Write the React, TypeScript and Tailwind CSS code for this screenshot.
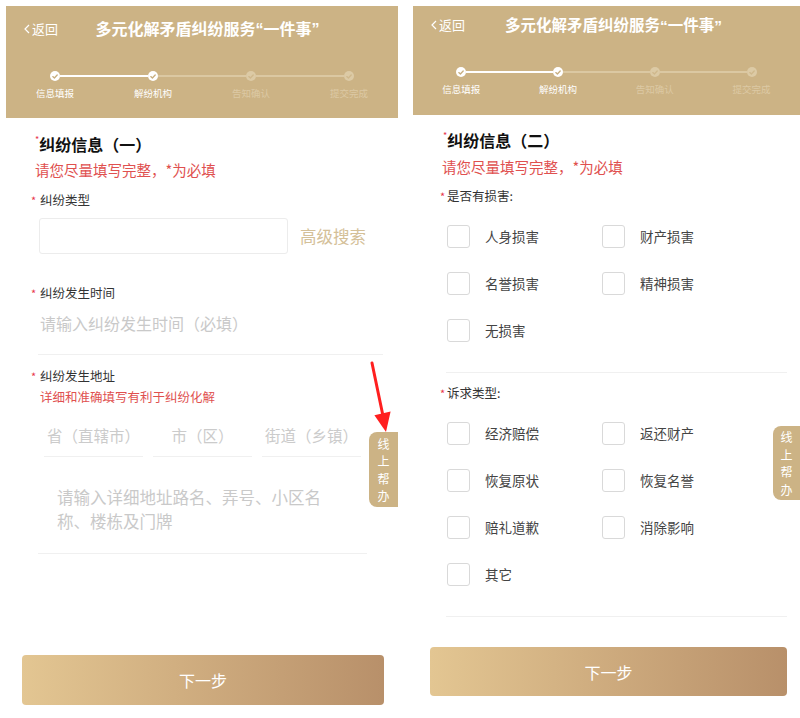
import React from "react";

const GOLD = "bg-[#ccb385]";

const Check = ({ color }: { color: string }) => (
  <svg width="6" height="5" viewBox="0 0 6 5">
    <polyline points="0.8,2.6 2.4,4 5.2,1" fill="none" stroke={color} strokeWidth="1.3" strokeLinecap="round" strokeLinejoin="round" />
  </svg>
);

const Stepper = () => {
  const steps = ["信息填报", "解纷机构", "告知确认", "提交完成"];
  const left = ["bg-transparent", "bg-white", "bg-[#dbc8a2]", "bg-[#dbc8a2]"];
  const right = ["bg-white", "bg-[#dbc8a2]", "bg-[#dbc8a2]", "bg-transparent"];
  return (
    <div className="grid grid-cols-4">
      {steps.map((s, i) => (
        <div key={s} className="flex flex-col items-center">
          <div className="flex items-center w-full h-[10px]">
            <div className={`flex-1 h-[2px] ${left[i]}`} />
            <div
              className={`w-[10px] h-[10px] rounded-full flex items-center justify-center ${
                i < 2 ? "bg-white" : "bg-[#dccaa5]"
              }`}
            >
              <Check color={i < 2 ? "#c8ae7e" : "#cfb88c"} />
            </div>
            <div className={`flex-1 h-[2px] ${right[i]}`} />
          </div>
          <div className={`mt-[5px] text-[9.5px] leading-[14px] ${i < 2 ? "text-white" : "text-[#dcc9a4]"}`}>{s}</div>
        </div>
      ))}
    </div>
  );
};

const Header = ({ h, pr, titleSize, top }: { h: string; pr: string; titleSize: string; top: string }) => (
  <div className={`${GOLD} ${h} flex flex-col`}>
    <div className={`flex items-center ${top}`}>
      <div className="w-[52px] shrink-0 pl-[18px] flex items-center gap-[2px] whitespace-nowrap text-white text-[13px]">
        <svg width="6" height="10" viewBox="0 0 6 10" className="shrink-0">
          <polyline points="5,1 1,5 5,9" fill="none" stroke="white" strokeWidth="1.2" />
        </svg>
        <span>返回</span>
      </div>
      <div className={`flex-1 text-center whitespace-nowrap text-white font-bold ${titleSize}`}>
        多元化解矛盾纠纷服务<span className="font-['Liberation_Sans',sans-serif]">“</span>一件事<span className="font-['Liberation_Sans',sans-serif]">”</span>
      </div>
      <div className={`shrink-0 ${pr}`} />
    </div>
    <Stepper />
  </div>
);

const Star = () => <span className="text-[#e8364c] text-[11px] w-[9px] inline-block">*</span>;

const SideTab = ({ cls }: { cls: string }) => (
  <div className={`absolute right-0 ${cls} ${GOLD} rounded-l-[8px] flex flex-col items-center justify-center text-white text-[12px] leading-[17.5px]`}>
    {"线上帮办".split("").map((c) => (
      <span key={c}>{c}</span>
    ))}
  </div>
);

const Box = ({ label }: { label: string }) => (
  <div className="flex items-center h-[47px]">
    <div className="w-[23px] h-[23px] border border-[#d9d9d9] rounded-[3px] bg-white" />
    <span className="ml-[15px] text-[13.5px] text-[#444]">{label}</span>
  </div>
);

const LeftPanel = () => (
  <div className="relative w-[392px] h-[712px] mt-[6px] ml-[6px] bg-white">
    <Header h="h-[112px]" pr="w-[41px]" titleSize="text-[16px]" top="h-[46px] mb-[19px]" />
    <div className="flex flex-col">
      <div className="ml-[29px] mt-[15px] flex items-start leading-[22px]">
        <span className="text-[#e8364c] text-[9px] leading-[14px]">*</span>
        <span className="text-[16px] font-bold text-[#111]">纠纷信息（一）</span>
      </div>
      <div className="ml-[29px] mt-[5px] text-[14.5px] leading-[20px] text-[#e0504f]">请您尽量填写完整，*为必填</div>
      <div className="ml-[25px] mt-[11px] flex items-center leading-[18px] text-[12.5px] text-[#333]">
        <Star />
        <span>纠纷类型</span>
      </div>
      <div className="ml-[33px] mt-[9px] flex items-center">
        <div className="w-[249px] h-[36px] border border-[#ececec] rounded-[3px]" />
        <span className="ml-[12px] text-[16.5px] text-[#d4c098]">高级搜索</span>
      </div>
      <div className="ml-[25px] mt-[30px] flex items-center leading-[18px] text-[12.5px] text-[#333]">
        <Star />
        <span>纠纷发生时间</span>
      </div>
      <div className="ml-[34px] mt-[10px] text-[16px] leading-[22px] text-[#c9c9c9]">请输入纠纷发生时间（必填）</div>
      <div className="ml-[32px] mt-[20px] w-[345px] h-px bg-[#f0f0f0]" />
      <div className="ml-[25px] mt-[12px] flex items-center leading-[18px] text-[12.5px] text-[#333]">
        <Star />
        <span>纠纷发生地址</span>
      </div>
      <div className="ml-[34px] mt-[3px] text-[12.5px] leading-[18px] text-[#e0504f]">详细和准确填写有利于纠纷化解</div>
      <div className="ml-[38px] mt-[18px] flex gap-[10px]">
        {["省（直辖市）", "市（区）", "街道（乡镇）"].map((t) => (
          <div key={t} className="w-[99px] pb-[10px] border-b border-[#f0f0f0] text-center text-[15.5px] leading-[22px] text-[#cbcbcb]">
            {t}
          </div>
        ))}
      </div>
      <div className="ml-[51px] mt-[28px] text-[16.5px] leading-[24px] text-[#c9c9c9]">
        请输入详细地址路名、弄号、小区名
        <br />
        称、楼栋及门牌
      </div>
      <div className="ml-[32px] mt-[20px] w-[329px] h-px bg-[#f0f0f0]" />
      <button className="ml-[16px] mt-[101px] w-[362px] h-[50px] rounded-[4px] bg-gradient-to-r from-[#e3c692] to-[#b8906a] text-white text-[16px]">
        下一步
      </button>
    </div>
    <SideTab cls="top-[426px] w-[29px] h-[75px]" />
    <svg className="absolute left-[355px] top-[350px]" width="37" height="85" viewBox="0 0 37 85">
      <line x1="11" y1="7" x2="21.6" y2="58" stroke="#ff1f1f" strokeWidth="3" strokeLinecap="round" />
      <polygon points="25,76 29.6,55.6 13.4,59.2" fill="#ff1f1f" />
    </svg>
  </div>
);

const RightPanel = () => (
  <div className="relative w-[387px] h-[712px] mt-[6px] ml-[15px] bg-white">
    <Header h="h-[109px]" pr="w-[38px]" titleSize="text-[15.5px]" top="h-[38px] mb-[23px]" />
    <div className="flex flex-col">
      <div className="ml-[30px] mt-[14px] flex items-start leading-[22px]">
        <span className="text-[#e8364c] text-[9px] leading-[14px]">*</span>
        <span className="text-[16px] font-bold text-[#111]">纠纷信息（二）</span>
      </div>
      <div className="ml-[29px] mt-[6px] text-[14.5px] leading-[20px] text-[#e0504f]">请您尽量填写完整，*为必填</div>
      <div className="ml-[27px] mt-[10px] flex items-center leading-[18px] text-[12.5px] text-[#333]">
        <span className="text-[#e8364c] text-[11px] w-[7px] inline-block">*</span>
        <span>是否有损害:</span>
      </div>
      <div className="ml-[34px] mt-[8px] grid grid-cols-[155px_155px]">
        {["人身损害", "财产损害", "名誉损害", "精神损害", "无损害"].map((t) => (
          <Box key={t} label={t} />
        ))}
      </div>
      <div className="ml-[33px] mt-[18px] w-[341px] h-px bg-[#f0f0f0]" />
      <div className="ml-[27px] mt-[11px] flex items-center leading-[18px] text-[12.5px] text-[#333]">
        <span className="text-[#e8364c] text-[11px] w-[7px] inline-block">*</span>
        <span>诉求类型:</span>
      </div>
      <div className="ml-[34px] mt-[8px] grid grid-cols-[155px_155px]">
        {["经济赔偿", "返还财产", "恢复原状", "恢复名誉", "赔礼道歉", "消除影响", "其它"].map((t) => (
          <Box key={t} label={t} />
        ))}
      </div>
      <div className="ml-[33px] mt-[18px] w-[341px] h-px bg-[#f0f0f0]" />
      <button className="ml-[17px] mt-[30px] w-[357px] h-[49px] rounded-[4px] bg-gradient-to-r from-[#e3c692] to-[#b8906a] text-white text-[16px]">
        下一步
      </button>
    </div>
    <SideTab cls="top-[420px] w-[27px] h-[74px]" />
  </div>
);

export default function App() {
  return (
    <div className="w-[800px] h-[718px] overflow-hidden bg-white flex font-['Noto_Sans_CJK_SC',sans-serif]">
      <LeftPanel />
      <RightPanel />
    </div>
  );
}
